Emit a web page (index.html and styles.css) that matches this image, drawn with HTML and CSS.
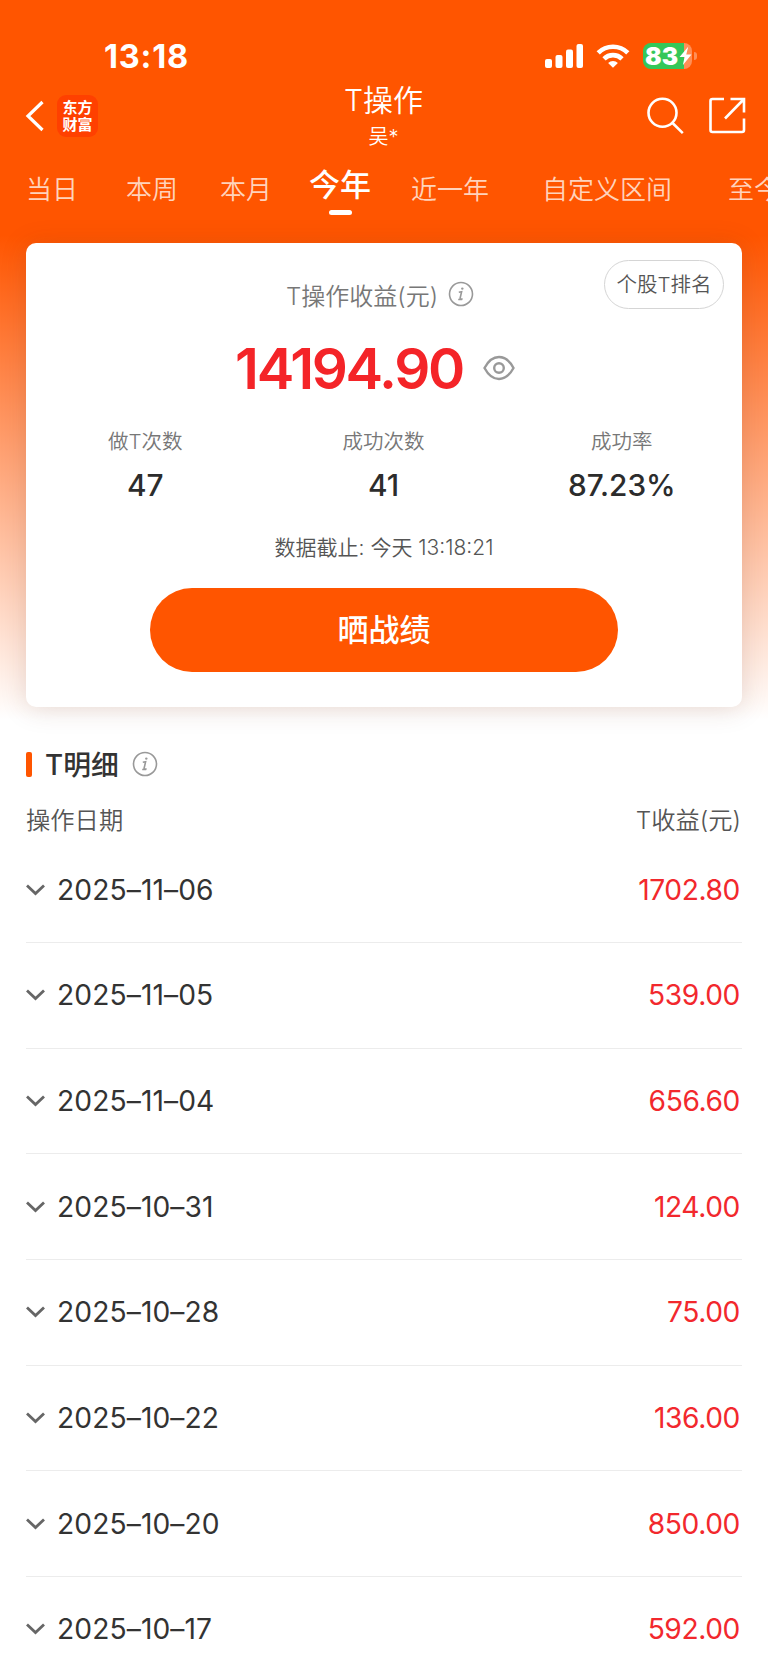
FILE: index.html
```html
<!DOCTYPE html>
<html lang="zh-CN">

<head>
  <meta charset="UTF-8">
  <meta name="viewport" content="width=device-width, initial-scale=1.0">
  <title>T操作</title>
  <link rel="stylesheet" href="styles.css">
</head>

<body>
  <div class="page">
    <div class="status-bar">
      <div class="time">13:18</div>
      <div class="status-icons">
        <svg class="signal" width="40" height="26" viewBox="0 0 40 26" fill="#fff">
          <rect x="1" y="16" width="7" height="9" rx="2" />
          <rect x="11.500" y="12" width="7" height="13" rx="2" />
          <rect x="22" y="6.500" width="7" height="18.500" rx="2" />
          <rect x="32.500" y="1" width="6.500" height="24" rx="2" />
        </svg>
        <svg class="wifi" width="34" height="26" viewBox="0 0 34 26">
          <g fill="none" stroke="#fff" stroke-width="4.600">
            <path d="M2.200 9.800a21 21 0 0 1 29.600 0" />
            <path d="M8 15.800a12.800 12.800 0 0 1 18 0" />
          </g>
          <path d="M17 24.800l-4.900-4.900a7 7 0 0 1 9.800 0z" fill="#fff" />
        </svg>
        <div class="battery">
          <span class="battery-level">83</span>
          <svg class="bolt" width="13" height="20" viewBox="0 0 12 18">
            <path d="M8.500 0.500L0.500 10h4.700L3.500 17.500L11.500 7.500H6.700z" fill="#fff" />
          </svg>
        </div>
        <span class="battery-cap"></span>
      </div>
    </div>

    <div class="nav">
      <div class="nav-left">
        <svg width="20" height="34" viewBox="0 0 20 34" fill="none" stroke="#fff" stroke-width="3.200">
          <path d="M17.500 3L3 17L17.500 31" />
        </svg>
        <div class="logo">东方<br>财富</div>
      </div>
      <div class="nav-title">
        <h1>T操作</h1>
        <p>吴*</p>
      </div>
      <div class="nav-right">
        <svg width="38" height="38" viewBox="0 0 38 38" fill="none" stroke="#fff" stroke-width="2.600">
          <circle cx="16.500" cy="15.800" r="14" />
          <path d="M26.500 26L36.800 36.200" />
        </svg>
        <svg width="38" height="38" viewBox="0 0 38 38" fill="none" stroke="#fff" stroke-width="2.600">
          <path d="M16 2H4.500Q2.500 2 2.500 4V33Q2.500 35 4.500 35H34Q36 35 36 33V21.500" />
          <path d="M22.500 2H36V15.500M36 2L17 21.500" />
        </svg>
      </div>
    </div>

    <div class="tabs">
      <div class="tab">当日</div>
      <div class="tab">本周</div>
      <div class="tab">本月</div>
      <div class="tab active">今年</div>
      <div class="tab">近一年</div>
      <div class="tab">自定义区间</div>
      <div class="tab">至今</div>
    </div>

    <div class="card">
      <div class="rank-button">个股T排名</div>
      <div class="profit-label">
        <span>T操作收益(元)</span>
        <svg class="info" width="26" height="26" viewBox="0 0 26 26">
          <circle cx="13" cy="13" r="11.500" />
          <path d="M10.800 11.300L13.600 10.800L12.100 17.200Q11.800 18.800 14.600 17.800M10.200 18.500H14.200" />
          <circle class="dot" cx="14.300" cy="7.600" r="1.200" />
        </svg>
      </div>
      <div class="profit">
        <span class="profit-value">14194.90</span>
        <svg width="32" height="26" viewBox="0 0 32 26" fill="none" stroke="#999" stroke-width="2.400">
          <path d="M1.500 13C5.500 5.500 10.500 2 16 2S26.500 5.500 30.500 13C26.500 20.500 21.500 24 16 24S5.500 20.500 1.500 13z" />
          <circle cx="16" cy="13" r="4.800" />
        </svg>
      </div>
      <div class="stats">
        <div class="stat">
          <div class="stat-label">做T次数</div>
          <div class="stat-value">47</div>
        </div>
        <div class="stat">
          <div class="stat-label">成功次数</div>
          <div class="stat-value">41</div>
        </div>
        <div class="stat">
          <div class="stat-label">成功率</div>
          <div class="stat-value">87.23%</div>
        </div>
      </div>
      <div class="deadline">数据截止: 今天 <span>13:18:21</span></div>
      <button class="share-button">晒战绩</button>
    </div>

    <div class="detail">
      <div class="detail-title">
        <h2>T明细</h2>
        <svg class="info" width="26" height="26" viewBox="0 0 26 26">
          <circle cx="13" cy="13" r="11.500" />
          <path d="M10.800 11.300L13.600 10.800L12.100 17.200Q11.800 18.800 14.600 17.800M10.200 18.500H14.200" />
          <circle class="dot" cx="14.300" cy="7.600" r="1.200" />
        </svg>
      </div>
      <div class="detail-head">
        <span>操作日期</span>
        <span>T收益(元)</span>
      </div>
      <div class="row">
        <svg class="arrow" viewBox="0 0 19 12"><path d="M1 1.500L9.500 9.500L18 1.500" /></svg>
        <span class="date">2025–11–06</span>
        <span class="amount">1702.80</span>
      </div>
      <div class="row">
        <svg class="arrow" viewBox="0 0 19 12"><path d="M1 1.500L9.500 9.500L18 1.500" /></svg>
        <span class="date">2025–11–05</span>
        <span class="amount">539.00</span>
      </div>
      <div class="row">
        <svg class="arrow" viewBox="0 0 19 12"><path d="M1 1.500L9.500 9.500L18 1.500" /></svg>
        <span class="date">2025–11–04</span>
        <span class="amount">656.60</span>
      </div>
      <div class="row">
        <svg class="arrow" viewBox="0 0 19 12"><path d="M1 1.500L9.500 9.500L18 1.500" /></svg>
        <span class="date">2025–10–31</span>
        <span class="amount">124.00</span>
      </div>
      <div class="row">
        <svg class="arrow" viewBox="0 0 19 12"><path d="M1 1.500L9.500 9.500L18 1.500" /></svg>
        <span class="date">2025–10–28</span>
        <span class="amount">75.00</span>
      </div>
      <div class="row">
        <svg class="arrow" viewBox="0 0 19 12"><path d="M1 1.500L9.500 9.500L18 1.500" /></svg>
        <span class="date">2025–10–22</span>
        <span class="amount">136.00</span>
      </div>
      <div class="row">
        <svg class="arrow" viewBox="0 0 19 12"><path d="M1 1.500L9.500 9.500L18 1.500" /></svg>
        <span class="date">2025–10–20</span>
        <span class="amount">850.00</span>
      </div>
      <div class="row">
        <svg class="arrow" viewBox="0 0 19 12"><path d="M1 1.500L9.500 9.500L18 1.500" /></svg>
        <span class="date">2025–10–17</span>
        <span class="amount">592.00</span>
      </div>
    </div>
  </div>
</body>

</html>
```

FILE: styles.css
```css
* {
  box-sizing: border-box;
}

body {
  margin: 0;
  font-family: Inter, 'Noto Sans CJK SC', sans-serif;
  font-weight: 350;
  color: #333;
  background-color: #fff;
}

h1,
h2,
p {
  margin: 0;
}

svg {
  display: block;
  flex-shrink: 0;
}

.page {
  height: 1670px;
  overflow: hidden;
  background: linear-gradient(#ff5500 235px, #fff 720px);
}

/* status bar */
.status-bar {
  display: flex;
  justify-content: space-between;
  align-items: center;
  height: 82px;
  padding: 30px 71px 0 104px;
  color: #fff;
}

.time {
  font-size: 32.5px;
  font-weight: 700;
  letter-spacing: 0.8px;
}

.status-icons {
  display: flex;
  align-items: center;
}

.wifi {
  margin: 0 13px 0 12px;
}

.battery {
  display: flex;
  align-items: center;
  width: 49px;
  height: 26px;
  padding-left: 2px;
  border-radius: 8px;
  background: linear-gradient(90deg, #34c759 41px, #ff8f57 41px);
}

.battery-level {
  width: 34px;
  font-size: 24.5px;
  font-weight: 900;
  line-height: 26px;
}

.battery-cap {
  width: 3px;
  height: 8px;
  margin-left: 2px;
  border-radius: 0 3px 3px 0;
  background-color: #ff8f57;
}

/* navigation */
.nav {
  display: grid;
  grid-template-columns: 1fr auto 1fr;
  height: 76px;
  padding: 0 22px 0 25px;
  color: #fff;
}

.nav-left,
.nav-right {
  display: flex;
  align-items: center;
  height: 67px;
}

.nav-left {
  gap: 12px;
}

.nav-right {
  gap: 24px;
  justify-content: flex-end;
}

.logo {
  width: 41px;
  height: 42px;
  padding-top: 4px;
  border-radius: 9px;
  background-color: #ff4000;
  font-size: 15px;
  font-weight: 700;
  line-height: 17px;
  text-align: center;
}

.nav-title {
  padding-right: 4px;
  text-align: center;
}

.nav-title h1 {
  font-size: 30px;
  font-weight: 350;
  line-height: 37px;
}

.nav-title p {
  font-size: 20px;
  line-height: 37px;
}

/* period tabs */
.tabs {
  display: flex;
  align-items: center;
  height: 60px;
  padding: 3px 0 0 26px;
  overflow: hidden;
  white-space: nowrap;
}

.tab {
  flex-shrink: 0;
  margin-right: 48px;
  color: #ffd3bc;
  font-size: 26px;
  line-height: 57px;
}

.tab:nth-child(2) {
  margin-right: 42px;
}

.tab:nth-child(3) {
  margin-right: 37px;
}

.tab:nth-child(5) {
  margin-right: 53px;
}

.tab:nth-child(6) {
  margin-right: 56px;
}

.tab.active {
  position: relative;
  margin-right: 40px;
  color: #fff;
  font-size: 31px;
  font-weight: 500;
  line-height: 47px;
  padding-bottom: 10px;
}

.tab.active::after {
  content: '';
  position: absolute;
  left: 50%;
  bottom: 3px;
  width: 23px;
  height: 5px;
  margin-left: -11px;
  border-radius: 3px;
  background-color: #fff;
}

/* summary card */
.card {
  position: relative;
  height: 464px;
  margin: 25px 26px 0;
  padding-top: 34px;
  border-radius: 10px;
  background-color: #fff;
  box-shadow: 0 2px 26px rgba(100, 50, 30, 0.17);
}

.rank-button {
  position: absolute;
  top: 17px;
  right: 18px;
  width: 120px;
  height: 49px;
  border: 1px solid #d5d5d5;
  border-radius: 25px;
  color: #555;
  font-size: 20.5px;
  line-height: 48px;
  text-align: center;
}

.profit-label {
  display: flex;
  align-items: center;
  justify-content: center;
  gap: 10px;
  height: 34px;
  padding-right: 8px;
  color: #777;
  font-size: 24px;
}

.info {
  fill: none;
  stroke: #999;
  stroke-width: 1.6;
}

.info .dot {
  fill: #999;
  stroke: none;
}

.profit {
  display: flex;
  align-items: center;
  justify-content: center;
  gap: 20px;
  height: 80px;
  margin-top: 17px;
  padding-right: 18px;
}

.profit-value {
  color: #f42428;
  font-size: 56.5px;
  font-weight: 560;
  letter-spacing: -2.3px;
}

.stats {
  display: grid;
  grid-template-columns: repeat(3, 1fr);
  margin-top: 18px;
  padding-right: 1px;
  text-align: center;
}

.stat-label {
  color: #777;
  font-size: 20.5px;
  line-height: 32px;
}

.stat-value {
  margin-top: 8px;
  font-size: 29.8px;
  font-weight: 500;
  line-height: 38px;
  color: #2c2c2c;
}

.deadline {
  margin-top: 27px;
  color: #555;
  font-size: 21px;
  line-height: 34px;
  text-align: center;
}

.share-button {
  display: block;
  width: 468px;
  height: 84px;
  margin: 23px auto 0;
  padding: 0 0 5px;
  border: none;
  border-radius: 42px;
  background-color: #ff5500;
  color: #fff;
  font-family: inherit;
  font-size: 31px;
  font-weight: 500;
}

/* detail list */
.detail {
  padding: 37px 26px 0;
}

.detail-title {
  display: flex;
  align-items: center;
  height: 40px;
}

.detail-title::before {
  content: '';
  width: 6px;
  height: 25px;
  margin-right: 13px;
  border-radius: 2px;
  background-color: #ff5500;
}

.detail-title h2 {
  margin-right: 13px;
  padding-bottom: 2px;
  font-size: 27.8px;
  font-weight: 500;
}

.detail-head {
  display: flex;
  justify-content: space-between;
  height: 40px;
  margin-top: 16px;
  padding-right: 1px;
  color: #555;
  font-size: 24.3px;
  line-height: 40px;
}

.row {
  display: flex;
  align-items: center;
  height: 105.7px;
  padding-right: 2px;
  border-bottom: 1px solid #ececec;
}

.detail-head + .row {
  height: 103px;
  padding-bottom: 3px;
}

.arrow {
  width: 19px;
  height: 12px;
  fill: none;
  stroke: #666;
  stroke-width: 2.8;
}

.date,
.amount {
  font-size: 28.2px;
  font-weight: 400;
}

.date {
  margin-left: 12px;
  letter-spacing: 0.1px;
}

.amount {
  margin-left: auto;
  color: #f2282d;
  letter-spacing: -0.4px;
}
```
